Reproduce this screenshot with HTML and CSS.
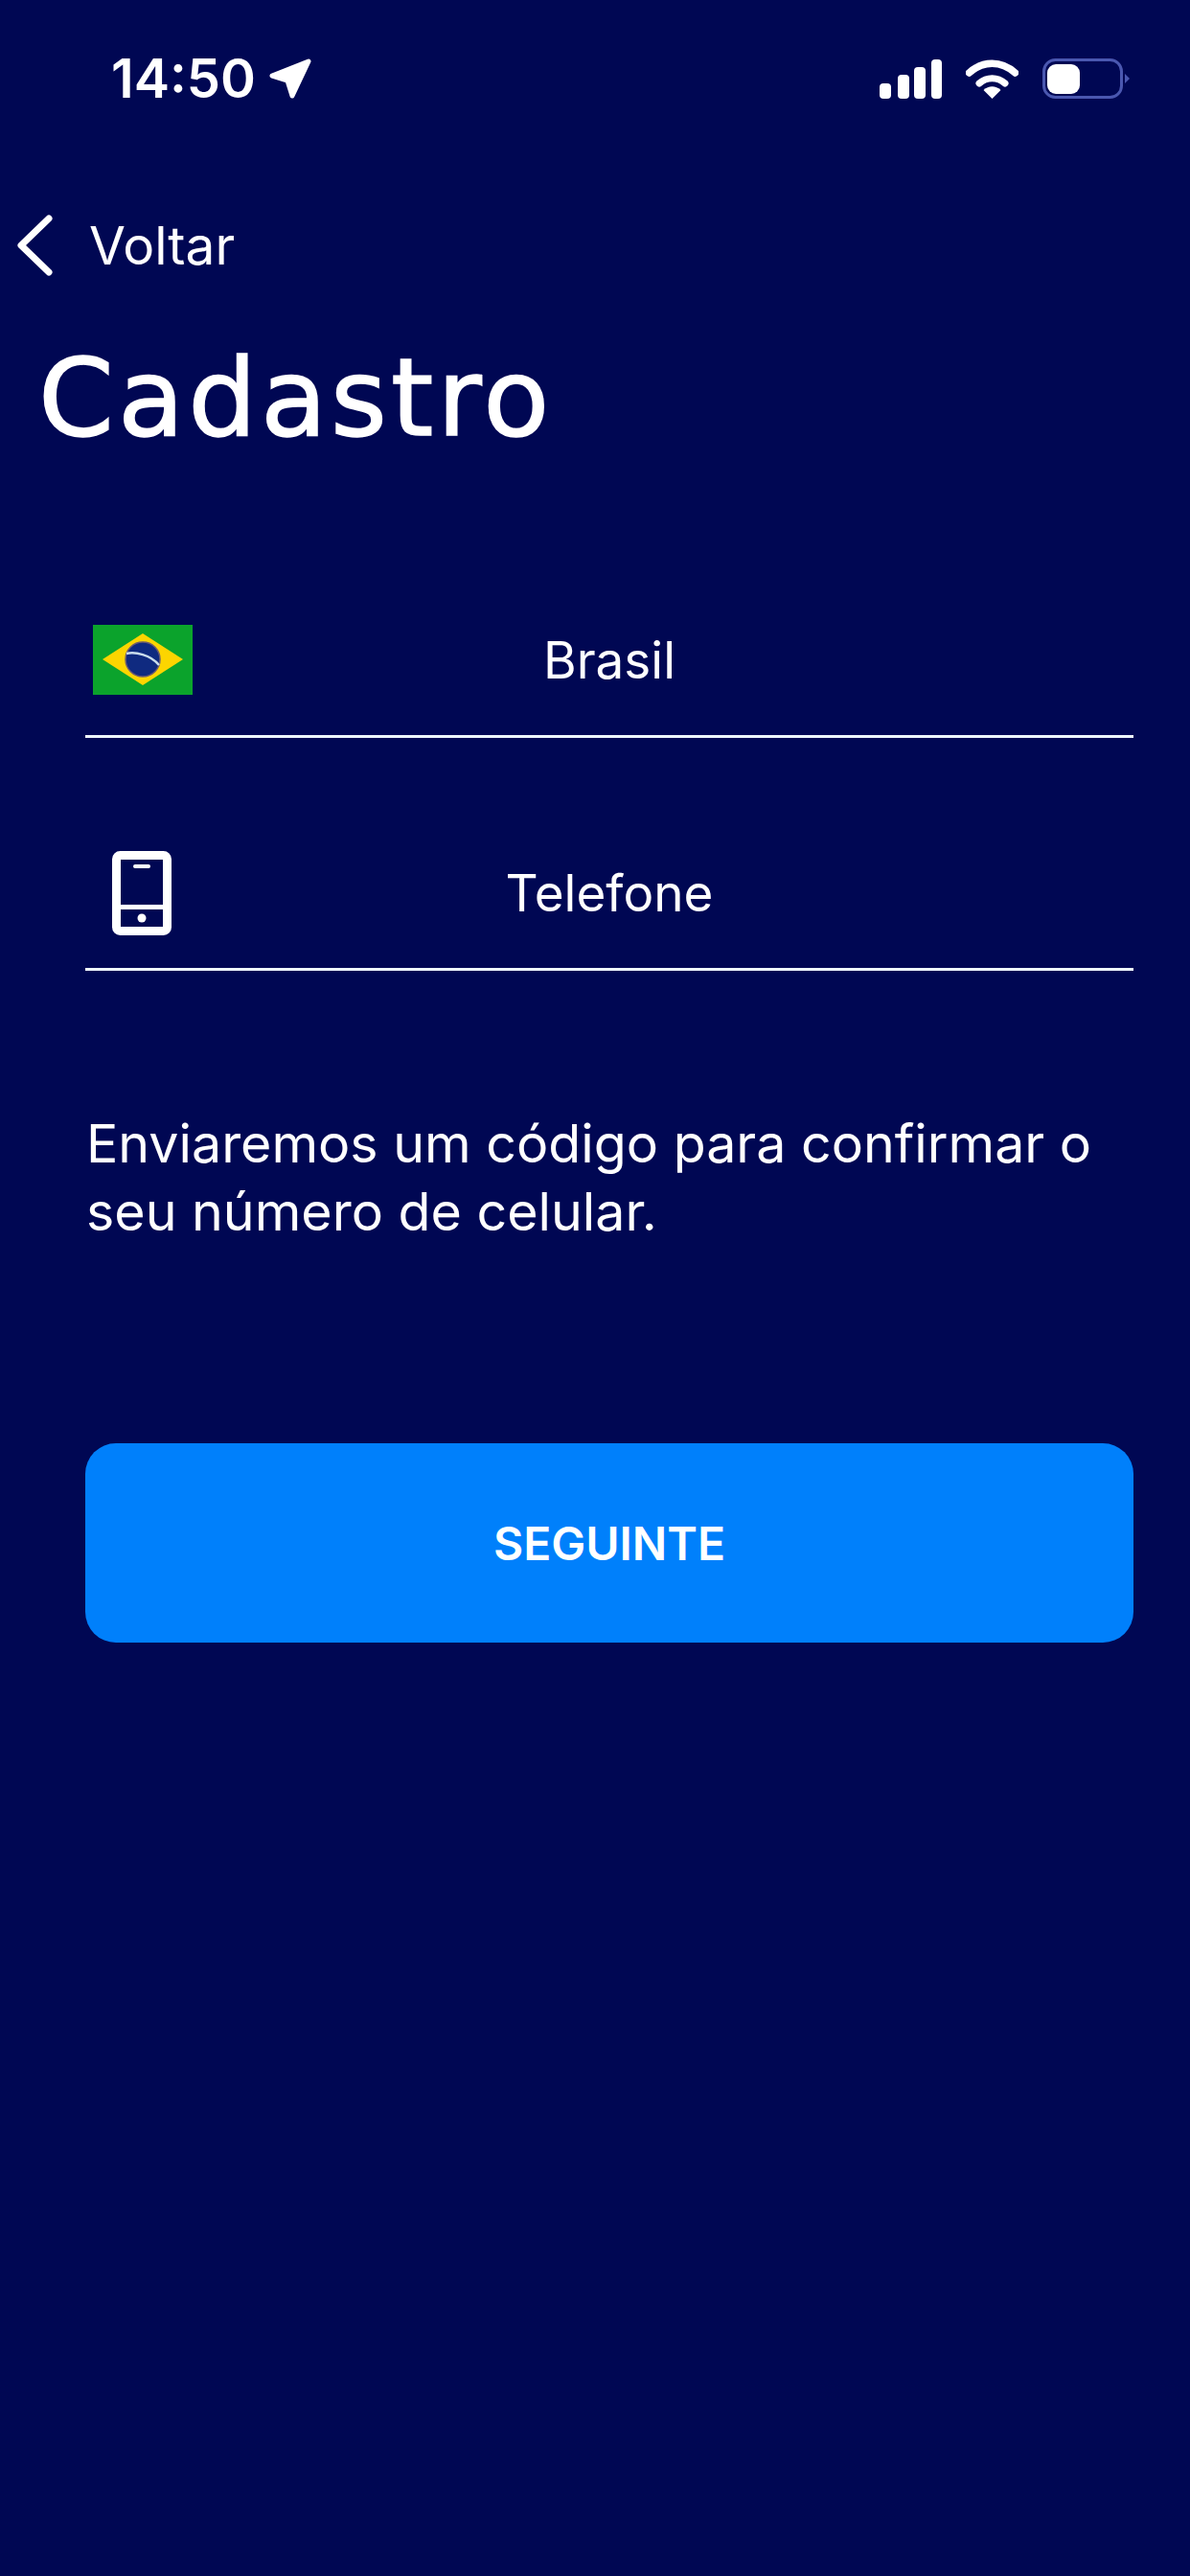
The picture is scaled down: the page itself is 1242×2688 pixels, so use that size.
FILE: index.html
```html
<!DOCTYPE html>
<html lang="pt-BR">
<head>
  <meta charset="UTF-8" />
  <meta name="viewport" content="width=device-width, initial-scale=1.0"/>
  <title>Cadastro</title>
  <link rel="stylesheet" href="styles.css">
</head>
<body>
  <div class="status-bar">
    <div class="status-time">
      <span>14:50</span>
      <svg class="location-icon" viewBox="0 0 44 42"><path d="M3 18 L41 3 L24 39 L19 23 Z" fill="#fff" stroke="#fff" stroke-width="5" stroke-linejoin="round"/></svg>
    </div>
    <div class="status-icons">
      <svg class="signal-icon" viewBox="0 0 65 41">
        <rect x="0" y="25" width="12" height="16" rx="4" fill="#fff"/>
        <rect x="19" y="16" width="12" height="25" rx="4" fill="#fff"/>
        <rect x="36" y="8" width="12" height="33" rx="4" fill="#fff"/>
        <rect x="54" y="0" width="11" height="41" rx="4" fill="#fff"/>
      </svg>
      <svg class="wifi-icon" viewBox="0 0 55 41">
        <path d="M3.5 14 C18 1 37 1 51.5 14" fill="none" stroke="#fff" stroke-width="7.5" stroke-linecap="round"/>
        <path d="M14 25 C22 18 33 18 41 25" fill="none" stroke="#fff" stroke-width="7" stroke-linecap="round"/>
        <path d="M18.5 32 C24 27 31 27 36.500 32 L27.500 41 Z" fill="#fff"/>
      </svg>
      <svg class="battery-icon" viewBox="0 0 91 42">
        <rect x="1.500" y="1.500" width="81" height="39" rx="12" fill="none" stroke="#4a57b0" stroke-width="3"/>
        <rect x="5" y="6" width="34" height="31" rx="9" fill="#fff"/>
        <path d="M86 16 L91 21 L86 26 Z" fill="#4a57b0"/>
      </svg>
    </div>
  </div>

  <div class="nav-bar">
    <svg class="back-icon" viewBox="0 0 37 64"><path d="M33 4 L4 32 L33 60" fill="none" stroke="#fff" stroke-width="7" stroke-linecap="round" stroke-linejoin="round"/></svg>
    <span class="back-label">Voltar</span>
  </div>

  <h1 class="page-title">Cadastro</h1>

  <div class="form">
    <div class="field">
      <svg class="flag-icon" viewBox="0 0 104 73">
        <rect width="104" height="73" fill="#0ba32c"/>
        <path d="M52 9 L94 36 L52 63 L10 36 Z" fill="#fcd500"/>
        <circle cx="52" cy="36" r="18" fill="#0f2a80" stroke="#6a5a70" stroke-width="1.500"/>
        <path d="M35 30 C44 28 60 31 69 42" fill="none" stroke="#c9dcec" stroke-width="2.500"/>
      </svg>
      <span class="field-value">Brasil</span>
    </div>
    <div class="field">
      <svg class="phone-icon" viewBox="0 0 62 88">
        <rect x="4.500" y="4.500" width="53" height="79" rx="4" fill="none" stroke="#fff" stroke-width="9"/>
        <rect x="6" y="56" width="50" height="5" fill="#fff"/>
        <rect x="22" y="14" width="18" height="4" rx="2" fill="#fff"/>
        <circle cx="31" cy="70" r="4.500" fill="#fff"/>
      </svg>
      <span class="field-value">Telefone</span>
    </div>

    <p class="hint">Enviaremos um código para confirmar o seu número de celular.</p>

    <button class="next-btn" type="button">SEGUINTE</button>
  </div>
</body>
</html>
```

FILE: styles.css
```css
* {
  box-sizing: border-box;
}
body {
  margin: 0;
  width: 1242px;
  height: 2688px;
  overflow: hidden;
  background: #000753;
  color: #fff;
  font-family: Inter, 'Liberation Sans', sans-serif;
}
.status-bar {
  height: 164px;
  padding: 0 63px 0 116px;
  display: flex;
  justify-content: space-between;
  align-items: center;
}
.status-time {
  display: flex;
  align-items: center;
  gap: 14px;
  font-size: 56px;
  font-weight: 600;
}
.location-icon {
  width: 44px;
  height: 42px;
}
.status-icons {
  display: flex;
  align-items: center;
  gap: 25px;
}
.signal-icon {
  width: 65px;
  height: 41px;
}
.wifi-icon {
  width: 55px;
  height: 41px;
}
.battery-icon {
  width: 91px;
  height: 42px;
}
.nav-bar {
  height: 184px;
  padding-left: 18px;
  display: flex;
  align-items: center;
  gap: 38px;
}
.back-icon {
  width: 37px;
  height: 64px;
}
.back-label {
  font-size: 55px;
}
.page-title {
  margin: 0 0 0 40px;
  height: 262px;
  font-family: 'DejaVu Sans', sans-serif;
  font-size: 113px;
  font-weight: 400;
  letter-spacing: 4px;
  line-height: 134px;
  -webkit-text-stroke: 1.500px #fff;
}
.form {
  padding: 0 59px 0 89px;
}
.field {
  height: 160px;
  margin-bottom: 83px;
  border-bottom: 3px solid #eef6ff;
  display: grid;
  grid-template-columns: 1fr auto 1fr;
  align-items: center;
}
.flag-icon {
  width: 104px;
  height: 73px;
  margin-left: 8px;
}
.phone-icon {
  width: 62px;
  height: 88px;
  margin-left: 28px;
}
.field-value {
  font-size: 53px;
}
.hint {
  margin: 144px 0 207px 1px;
  font-size: 55.500px;
  line-height: 71px;
}
.next-btn {
  display: block;
  width: 100%;
  height: 208px;
  background: #0080fb;
  color: #fff;
  border: none;
  border-radius: 32px;
  font-family: inherit;
  font-size: 48px;
  font-weight: 600;
}
```
